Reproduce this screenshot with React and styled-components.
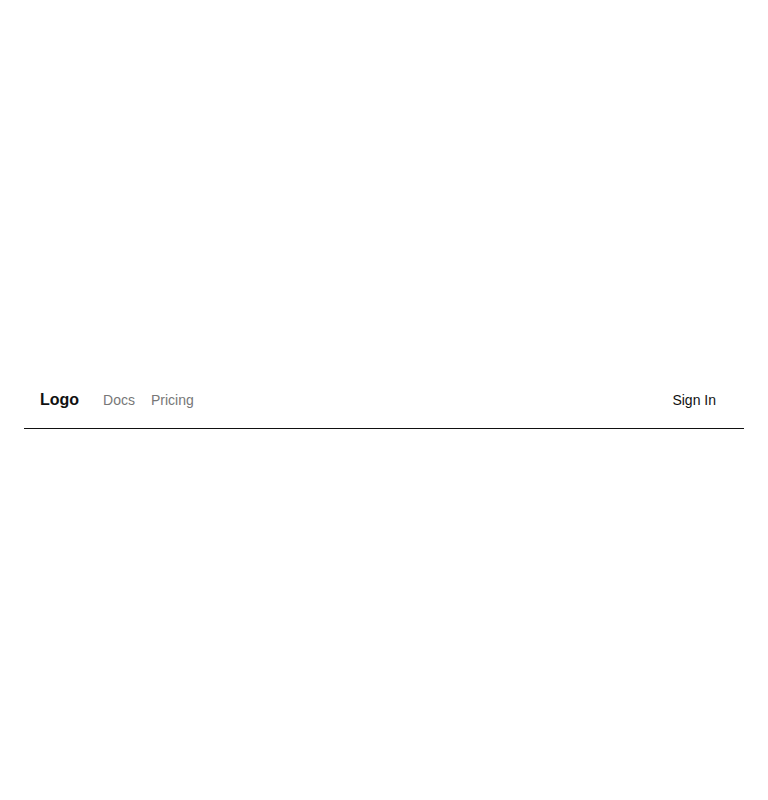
import React from 'react';
import styled, { createGlobalStyle } from 'styled-components';

const GlobalStyle = createGlobalStyle`
  * { box-sizing: border-box; }
  body {
    margin: 0;
    background: #ffffff;
    font-family: "Liberation Sans", Arial, sans-serif;
  }
`;

const Page = styled.div`
  min-height: 100vh;
  display: flex;
  align-items: center;
  padding: 0 24px;
`;

const Header = styled.header`
  width: 100%;
  height: 57px;
  display: flex;
  align-items: center;
  justify-content: space-between;
  padding: 0 16px;
  border-bottom: 1px solid #111111;
`;

const Left = styled.div`
  display: flex;
  align-items: center;
  gap: 24px;
`;

const Logo = styled.a`
  font-size: 16px;
  font-weight: bold;
  color: #111111;
  text-decoration: none;
`;

const Links = styled.nav`
  display: flex;
  align-items: center;
  gap: 16px;
`;

const NavLink = styled.a`
  font-size: 14px;
  color: #777777;
  text-decoration: none;
`;

const SignIn = styled.button`
  padding: 8px 12px;
  background: transparent;
  border: none;
  font-family: inherit;
  font-size: 14px;
  color: #111111;
  cursor: pointer;
`;

const App = () => {
  return (
    <>
      <GlobalStyle />
      <Page>
        <Header>
          <Left>
            <Logo href="#">Logo</Logo>
            <Links>
              <NavLink href="#">Docs</NavLink>
              <NavLink href="#">Pricing</NavLink>
            </Links>
          </Left>
          <SignIn>Sign In</SignIn>
        </Header>
      </Page>
    </>
  );
};

export default App;
